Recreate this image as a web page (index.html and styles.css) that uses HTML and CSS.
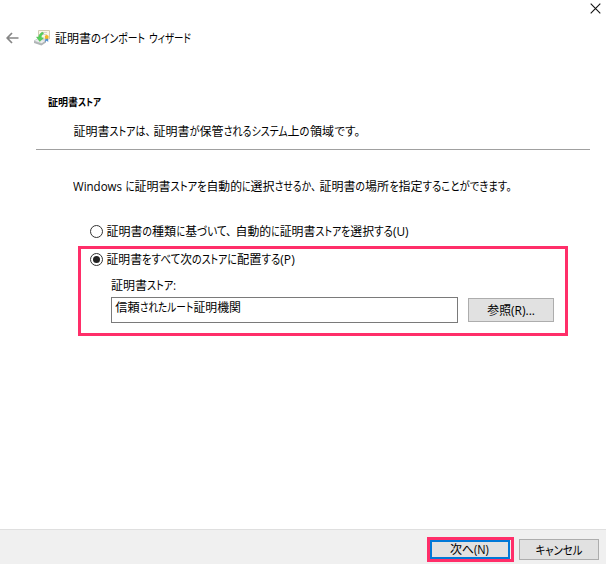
FILE: index.html
```html
<!DOCTYPE html>
<html lang="ja">
<head>
<meta charset="utf-8">
<title>証明書のインポート ウィザード</title>
<link rel="stylesheet" href="styles.css">
</head>
<body>
<div class="wizard">
  <div class="titlebar">
    <svg class="close" width="11" height="11" viewBox="0 0 11 11"><path d="M.7 .7l9.6 9.6M10.3 .7l-9.6 9.6" fill="none" stroke="#111" stroke-width="1.1"/></svg>
  </div>
  <header class="header">
    <svg class="back" width="13" height="12" viewBox="0 0 13 12"><path d="M6 1L1.2 6 6 11M1.2 6H12.5" fill="none" stroke="#858585" stroke-width="1.7"/></svg>
    <svg class="cert" width="17" height="17" viewBox="0 0 17 17">
      <path d="M4.5 1.5h11v8.5h-11z" fill="#fbf7e8" stroke="#d3cbb2"/>
      <path d="M7 3.5h6M8 5.5h5" stroke="#d8d4ca"/>
      <path d="M0 12l4-2.5 8 2-4 3.2z" fill="#eceeef" stroke="#b1b6b8" stroke-width=".6"/>
      <path d="M0 12v2l7.5 2.5 4.5-3v-2l-4.5 3z" fill="#b0b5b7"/>
      <path d="M8.8 3.2C6 4 4.8 6 4.8 8.2L2.5 8l3.2 4.5L9.5 9 7.3 8.6C7.2 6.8 8 5.5 9.6 4.6z" fill="#55d259" stroke="#3aae46" stroke-width=".4"/>
      <path d="M11.5 9l-.5 4 1.7-1.2L14.3 13 14 9z" fill="#4e8dd0"/>
      <circle cx="12.7" cy="8" r="2" fill="#f3b527"/>
    </svg>
    <svg class="line title" width="140" height="18" viewBox="55 0 140 18"><text y="14"><tspan x="55" textLength="36" lengthAdjust="spacingAndGlyphs">証明書</tspan><tspan x="91" textLength="10" lengthAdjust="spacingAndGlyphs">の</tspan><tspan x="101" textLength="44" lengthAdjust="spacingAndGlyphs">インポート</tspan><tspan x="149" textLength="42" lengthAdjust="spacingAndGlyphs">ウィザード</tspan></text></svg>
  </header>
  <section class="intro">
    <svg class="line heading" width="60" height="16" viewBox="48 0 60 16"><text y="12"><tspan x="48" textLength="30" lengthAdjust="spacingAndGlyphs">証明書</tspan><tspan x="78" textLength="23" lengthAdjust="spacingAndGlyphs">ストア</tspan></text></svg>
    <svg class="line subtitle" width="300" height="18" viewBox="73 0 300 18"><text y="14"><tspan x="73.5" textLength="36" lengthAdjust="spacingAndGlyphs">証明書</tspan><tspan x="109.5" textLength="26" lengthAdjust="spacingAndGlyphs">ストア</tspan><tspan x="135.5" textLength="15" lengthAdjust="spacingAndGlyphs">は、</tspan><tspan x="153.5" textLength="36" lengthAdjust="spacingAndGlyphs">証明書</tspan><tspan x="189.5" textLength="10" lengthAdjust="spacingAndGlyphs">が</tspan><tspan x="199.5" textLength="24" lengthAdjust="spacingAndGlyphs">保管</tspan><tspan x="223.5" textLength="28" lengthAdjust="spacingAndGlyphs">される</tspan><tspan x="251.5" textLength="36" lengthAdjust="spacingAndGlyphs">システム</tspan><tspan x="287.5" textLength="12" lengthAdjust="spacingAndGlyphs">上</tspan><tspan x="299.5" textLength="10" lengthAdjust="spacingAndGlyphs">の</tspan><tspan x="310" textLength="24" lengthAdjust="spacingAndGlyphs">領域</tspan><tspan x="334.5" textLength="25.5" lengthAdjust="spacingAndGlyphs">です。</tspan></text></svg>
  </section>
  <main class="content">
    <svg class="line" width="450" height="18" viewBox="73 0 450 18"><text y="14"><tspan x="73" textLength="49" lengthAdjust="spacingAndGlyphs">Windows</tspan><tspan x="125.5" textLength="9" lengthAdjust="spacingAndGlyphs">に</tspan><tspan x="134.5" textLength="36" lengthAdjust="spacingAndGlyphs">証明書</tspan><tspan x="170.5" textLength="36" lengthAdjust="spacingAndGlyphs">ストアを</tspan><tspan x="206.5" textLength="35.5" lengthAdjust="spacingAndGlyphs">自動的</tspan><tspan x="242" textLength="8.5" lengthAdjust="spacingAndGlyphs">に</tspan><tspan x="250.5" textLength="24" lengthAdjust="spacingAndGlyphs">選択</tspan><tspan x="274.5" textLength="41.5" lengthAdjust="spacingAndGlyphs">させるか、</tspan><tspan x="319.5" textLength="36" lengthAdjust="spacingAndGlyphs">証明書</tspan><tspan x="355.5" textLength="9.5" lengthAdjust="spacingAndGlyphs">の</tspan><tspan x="365" textLength="24" lengthAdjust="spacingAndGlyphs">場所</tspan><tspan x="389.5" textLength="9" lengthAdjust="spacingAndGlyphs">を</tspan><tspan x="398.5" textLength="24" lengthAdjust="spacingAndGlyphs">指定</tspan><tspan x="422.5" textLength="89" lengthAdjust="spacingAndGlyphs">することができます。</tspan></text></svg>
    <div class="option first">
      <span class="radio"></span>
      <svg class="line" width="310" height="18" viewBox="106 0 310 18"><text y="14"><tspan x="106.5" textLength="36" lengthAdjust="spacingAndGlyphs">証明書</tspan><tspan x="142.5" textLength="9.5" lengthAdjust="spacingAndGlyphs">の</tspan><tspan x="152" textLength="24" lengthAdjust="spacingAndGlyphs">種類</tspan><tspan x="176.5" textLength="8.5" lengthAdjust="spacingAndGlyphs">に</tspan><tspan x="185.2" textLength="11.8" lengthAdjust="spacingAndGlyphs">基</tspan><tspan x="197" textLength="34.5" lengthAdjust="spacingAndGlyphs">づいて、</tspan><tspan x="235.5" textLength="35.7" lengthAdjust="spacingAndGlyphs">自動的</tspan><tspan x="271.3" textLength="8.3" lengthAdjust="spacingAndGlyphs">に</tspan><tspan x="279.7" textLength="35.7" lengthAdjust="spacingAndGlyphs">証明書</tspan><tspan x="315.5" textLength="34.8" lengthAdjust="spacingAndGlyphs">ストアを</tspan><tspan x="350.3" textLength="23.7" lengthAdjust="spacingAndGlyphs">選択</tspan><tspan x="374" textLength="19" lengthAdjust="spacingAndGlyphs">する</tspan><tspan x="393" textLength="15.6" lengthAdjust="spacingAndGlyphs">(U)</tspan></text></svg>
    </div>
    <div class="callout place">
      <div class="option">
        <span class="radio on"></span>
        <svg class="line" width="195" height="18" viewBox="106 0 195 18"><text y="14"><tspan x="106.5" textLength="35.5" lengthAdjust="spacingAndGlyphs">証明書</tspan><tspan x="142" textLength="38.3" lengthAdjust="spacingAndGlyphs">をすべて</tspan><tspan x="180.3" textLength="11.7" lengthAdjust="spacingAndGlyphs">次</tspan><tspan x="192" textLength="9.7" lengthAdjust="spacingAndGlyphs">の</tspan><tspan x="201.7" textLength="35.3" lengthAdjust="spacingAndGlyphs">ストアに</tspan><tspan x="237" textLength="24.5" lengthAdjust="spacingAndGlyphs">配置</tspan><tspan x="261.5" textLength="18.8" lengthAdjust="spacingAndGlyphs">する</tspan><tspan x="280.3" textLength="14.4" lengthAdjust="spacingAndGlyphs">(P)</tspan></text></svg>
      </div>
      <svg class="line label" width="70" height="18" viewBox="111 0 70 18"><text y="14"><tspan x="111" textLength="36" lengthAdjust="spacingAndGlyphs">証明書</tspan><tspan x="147" textLength="29" lengthAdjust="spacingAndGlyphs">ストア:</tspan></text></svg>
      <div class="row">
        <div class="field"><svg class="line" width="130" height="18" viewBox="115 0 130 18"><text y="14"><tspan x="115.2" textLength="24.5" lengthAdjust="spacingAndGlyphs">信頼</tspan><tspan x="139.8" textLength="27.5" lengthAdjust="spacingAndGlyphs">された</tspan><tspan x="167.3" textLength="26" lengthAdjust="spacingAndGlyphs">ルート</tspan><tspan x="193.5" textLength="47.5" lengthAdjust="spacingAndGlyphs">証明機関</tspan></text></svg></div>
        <div class="button browse"><svg class="line" width="48" height="18" viewBox="487 0 48 18"><text y="13.5"><tspan x="487.3" textLength="23.7" lengthAdjust="spacingAndGlyphs">参照</tspan><tspan x="511" textLength="24" lengthAdjust="spacingAndGlyphs">(R)...</tspan></text></svg></div>
      </div>
    </div>
  </main>
  <footer class="footer">
    <div class="callout next"><div class="button primary"><svg class="line" width="40" height="18" viewBox="450 0 40 18"><text y="13"><tspan x="450" textLength="12" lengthAdjust="spacingAndGlyphs">次</tspan><tspan x="462" textLength="12" lengthAdjust="spacingAndGlyphs">へ</tspan><tspan x="474" textLength="14.8" lengthAdjust="spacingAndGlyphs">(N)</tspan></text></svg></div></div>
    <div class="button cancel"><svg class="line" width="48" height="18" viewBox="535 0 48 18"><text y="13.5"><tspan x="535.5" textLength="47" lengthAdjust="spacingAndGlyphs">キャンセル</tspan></text></svg></div>
  </footer>
</div>
</body>
</html>
```
FILE: styles.css
```css
* { box-sizing: border-box; }
body { margin: 0; background: #fff; font-family: "Open Sans", "Noto Sans CJK JP", sans-serif; font-size: 12px; color: #000; }
svg { display: block; flex: none; }
.wizard { width: 606px; height: 564px; display: flex; flex-direction: column; overflow: hidden; }
.line text { fill: #000; font-feature-settings: "palt"; }
.line tspan { white-space: pre; }
.titlebar { height: 29px; display: flex; justify-content: flex-end; padding: 3px 5px 0 0; }
.header { height: 61px; display: flex; align-items: flex-start; padding-left: 6px; }
.back { margin-top: 3px; }
.cert { margin: 0 0 0 15px; }
.title { margin-left: 4px; }
.intro { height: 60px; margin: 0 16px 0 36px; padding-top: 4px; border-bottom: 1px solid #a0a0a0; }
.heading { margin-left: 12px; font-size: 10px; font-weight: 700; }
.subtitle { margin: 12px 0 0 37px; }
.content { flex: 1; padding: 27px 0 0 73px; }
.option { display: flex; align-items: center; gap: 3px; }
.option.first { margin: 27px 0 0 17px; }
.radio { width: 13px; height: 13px; border: 1px solid #333; border-radius: 50%; background: #fff; display: grid; place-items: center; }
.radio.on::after { content: ""; width: 7px; height: 7px; border-radius: 50%; background: #222; }
.callout { border: 3px solid #ff2e69; }
.place { width: 490px; height: 90px; margin: 6px 0 0 5px; padding: 1px 0 0 9px; }
.label { margin: 8px 0 0 21px; }
.row { display: flex; align-items: center; gap: 10px; margin: 3px 0 0 21px; }
.field { width: 347px; height: 26px; border: 1px solid #7a7a7a; padding: 0 0 0 3px; }
.button { display: flex; align-items: center; justify-content: center; background: #e1e1e1; border: 1px solid #adadad; }
.browse { width: 86px; height: 24px; }
.footer { height: 35px; background: #f0f0f0; border-top: 1px solid #dfdfdf; display: flex; justify-content: flex-end; padding: 7px 7px 0 0; gap: 5px; }
.next { width: 87px; height: 25px; padding-right: 1px; }
.primary { height: 19px; border: 2px solid #0078d7; }
.cancel { width: 80px; height: 21px; margin-top: 2px; }
```
